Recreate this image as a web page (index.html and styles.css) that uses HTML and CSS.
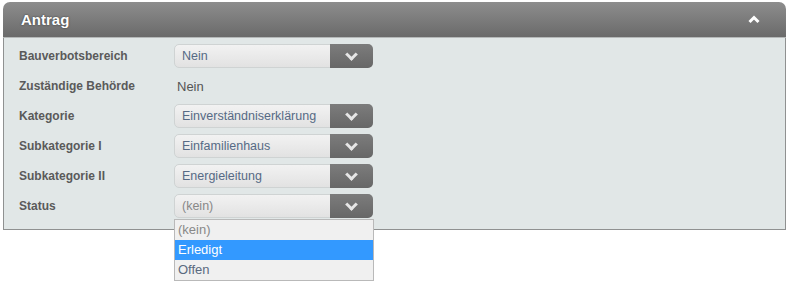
FILE: index.html
```html
<!DOCTYPE html>
<html lang="de">
<head>
    <meta charset="UTF-8">
    <title>Antrag</title>
    <link rel="stylesheet" href="styles.css">
</head>
<body>
    <div class="panel">
        <div class="panel-header">
            <h2>Antrag</h2>
            <svg class="toggle" width="14" height="10" viewBox="0 0 14 10">
                <path d="M2.5 8 L7 3.5 L11.5 8" fill="none" stroke="#fff" stroke-width="3"/>
            </svg>
        </div>
        <div class="panel-body">
            <div class="row">
                <label>Bauverbotsbereich</label>
                <div class="select"><span>Nein</span><i class="btn"></i></div>
            </div>
            <div class="row">
                <label>Zuständige Behörde</label>
                <span class="value">Nein</span>
            </div>
            <div class="row">
                <label>Kategorie</label>
                <div class="select"><span>Einverständniserklärung</span><i class="btn"></i></div>
            </div>
            <div class="row">
                <label>Subkategorie I</label>
                <div class="select"><span>Einfamilienhaus</span><i class="btn"></i></div>
            </div>
            <div class="row">
                <label>Subkategorie II</label>
                <div class="select"><span>Energieleitung</span><i class="btn"></i></div>
            </div>
            <div class="row">
                <label>Status</label>
                <div class="select open">
                    <span class="empty">(kein)</span><i class="btn"></i>
                    <ul class="options">
                        <li class="empty">(kein)</li>
                        <li class="active">Erledigt</li>
                        <li>Offen</li>
                    </ul>
                </div>
            </div>
        </div>
    </div>
</body>
</html>
```

FILE: styles.css
```css
body {
    margin: 0;
    padding: 2px 3px;
    min-height: 282px;
    font-family: "Liberation Sans", Arial, sans-serif;
    background: #fff;
}
.panel {
    width: 783px;
}
.panel-header {
    height: 35px;
    display: flex;
    align-items: center;
    justify-content: space-between;
    padding: 0 25px 0 18px;
    background: linear-gradient(#8d8d8d, #6a6a6a);
    border-radius: 7px 7px 0 0;
    border-bottom: 1px solid #b5b8b8;
}
.panel-header h2 {
    margin: 0;
    font-size: 15px;
    color: #fff;
    text-shadow: 0 0 2px #333;
}
.toggle {
    margin-top: -2px;
}
.panel-body {
    background: #e1e7e7;
    border: 1px solid #8f9191;
    border-top: none;
    padding: 3px 0 8px 15px;
}
.row {
    display: flex;
    align-items: center;
    height: 30px;
}
.row label {
    width: 155px;
    font-size: 12px;
    font-weight: bold;
    color: #5a5a5a;
}
.value {
    font-size: 13px;
    color: #555;
    padding-left: 3px;
}
.select {
    position: relative;
    width: 197px;
    height: 22px;
    display: flex;
    align-items: center;
    border: 1px solid #cfd3d3;
    border-radius: 5px;
    background: linear-gradient(#f2f2f2, #e2e2e2);
    font-size: 12.5px;
    color: #566a85;
}
.select span {
    flex: 1;
    padding-left: 7px;
}
.select .empty {
    color: #888;
}
.btn {
    width: 43px;
    height: 24px;
    margin: -1px -1px -1px 0;
    border-radius: 0 5px 5px 0;
    background: linear-gradient(#7c7c7c, #676767) no-repeat;
    position: relative;
}
.btn::after {
    content: "";
    position: absolute;
    left: 17px;
    top: 6px;
    width: 6px;
    height: 6px;
    border-right: 3px solid #e6e6e6;
    border-bottom: 3px solid #e6e6e6;
    transform: rotate(45deg);
}
.options {
    position: absolute;
    z-index: 2;
    top: 24px;
    left: -1px;
    width: 198px;
    margin: 0;
    padding: 0;
    list-style: none;
    background: #f0f0f0;
    border: 1px solid #b9b9b9;
}
.options li {
    height: 20px;
    line-height: 20px;
    padding-left: 3px;
    font-size: 13px;
    color: #5a6a80;
}
.options li.empty {
    color: #888;
}
.options li.active {
    background: #3399ff;
    color: #fff;
}
```
